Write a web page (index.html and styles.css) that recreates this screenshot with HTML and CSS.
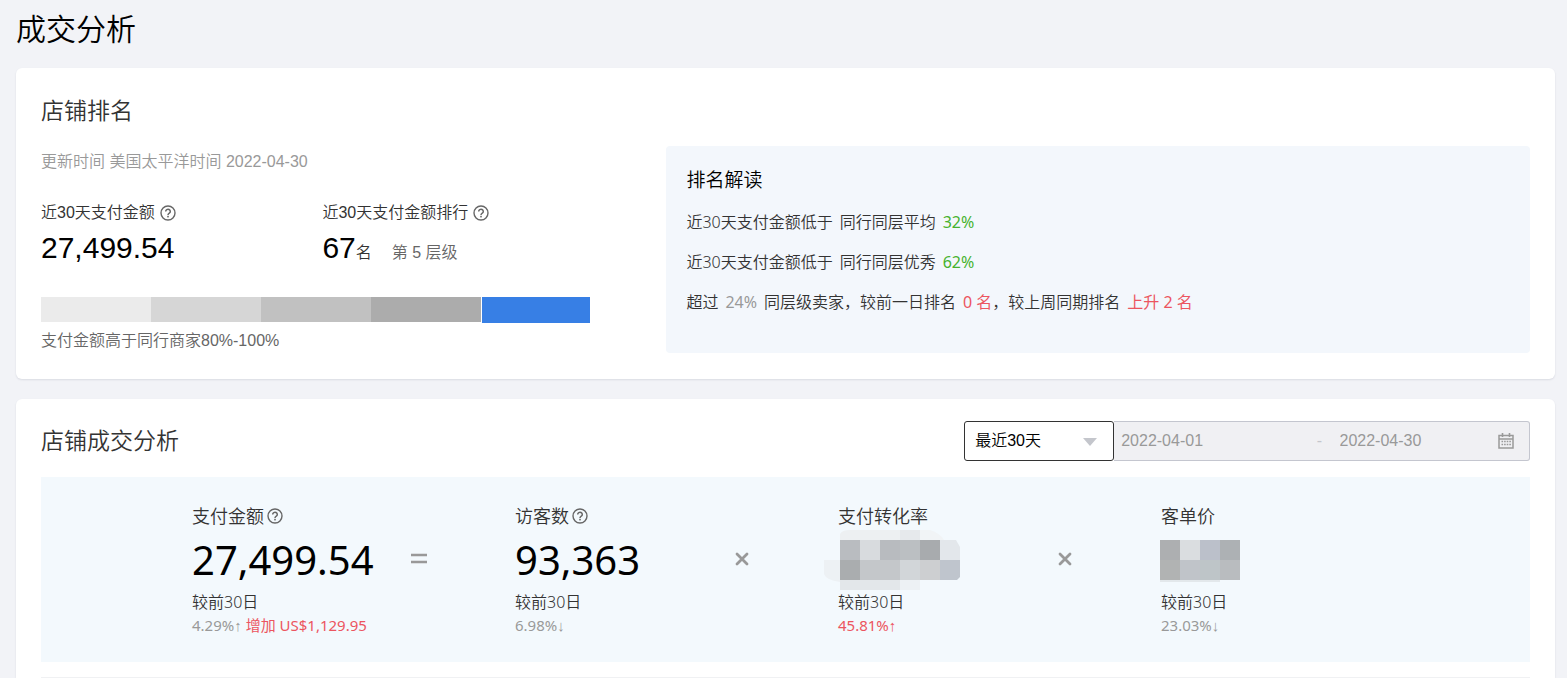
FILE: index.html
```html
<!DOCTYPE html>
<html lang="zh-CN">
<head>
<meta charset="utf-8">
<meta name="viewport" content="width=device-width, initial-scale=1">
<title>成交分析</title>
<link rel="stylesheet" href="styles.css">
</head>
<body>
<svg width="0" height="0" class="sprite" aria-hidden="true">
  <symbol id="help" viewBox="0 0 16 16">
    <circle cx="8" cy="8" r="7" fill="none" stroke="currentColor" stroke-width="1.4"/>
    <path d="M5.7 6.4a2.3 2.1 0 1 1 3.6 1.7C8.4 8.700 8 9 8 9.900" fill="none" stroke="currentColor" stroke-width="1.5"/>
    <rect x="7.200" y="10.800" width="1.600" height="1.600" fill="currentColor"/>
  </symbol>
  <symbol id="times" viewBox="0 0 18 18">
    <path d="M4 3l10 10M14 3L4 13" fill="none" stroke="currentColor" stroke-width="2.800" stroke-linecap="round"/>
  </symbol>
</svg>
<main class="page">
  <h1 class="page-title">成交分析</h1>

  <section class="card">
    <h2 class="card-title">店铺排名</h2>
    <div class="rank">
      <div class="rank-data">
        <p class="updated">更新时间 美国太平洋时间 2022-04-30</p>
        <div class="stats">
          <div class="stat">
            <div class="stat-label">近30天支付金额<svg class="help"><use href="#help"/></svg></div>
            <div class="stat-value">27,499.54</div>
          </div>
          <div class="stat">
            <div class="stat-label">近30天支付金额排行<svg class="help"><use href="#help"/></svg></div>
            <div class="stat-value">67<span class="unit">名</span><span class="level">第 5 层级</span></div>
          </div>
        </div>
        <div class="levels">
          <span class="seg seg-1"></span><span class="seg seg-2"></span><span class="seg seg-3"></span><span class="seg seg-4"></span><span class="seg seg-5"></span>
        </div>
        <p class="caption">支付金额高于同行商家80%-100%</p>
      </div>
      <div class="insight">
        <h3 class="insight-title">排名解读</h3>
        <p class="insight-row"><span>近30天支付金额低于</span><span>同行同层平均</span><span class="good">32%</span></p>
        <p class="insight-row"><span>近30天支付金额低于</span><span>同行同层优秀</span><span class="good">62%</span></p>
        <p class="insight-row"><span>超过</span><span class="muted">24%</span><span>同层级卖家，较前一日排名</span><span><span class="bad">0 名</span>，较上周同期排名</span><span class="bad">上升 2 名</span></p>
      </div>
    </div>
  </section>

  <section class="card card-deal">
    <header class="deal-head">
      <h2 class="card-title">店铺成交分析</h2>
      <div class="filters">
        <div class="period">
          <select class="period-select" aria-label="统计周期"><option>最近30天</option></select>
          <svg class="caret" viewBox="0 0 14 8" aria-hidden="true"><path d="M0 0h14L7 8z" fill="#c4c6cc"/></svg>
        </div>
        <div class="range">
          <input class="date date-start" type="text" value="2022-04-01" aria-label="开始日期" disabled>
          <span class="dash">-</span>
          <input class="date date-end" type="text" value="2022-04-30" aria-label="结束日期" disabled>
          <svg class="calendar" viewBox="0 0 16 16" aria-hidden="true">
            <path d="M1 2.500h14v12.500H1zM1 6h14" fill="none" stroke="#999" stroke-width="1.500"/>
            <path d="M4.500 0v4M11.500 0v4" stroke="#999" stroke-width="1.600"/>
            <path d="M3.500 8.500h9.500M3.500 11.500h9.500" stroke="#999" stroke-width="1.600" stroke-dasharray="1.600 1"/>
          </svg>
        </div>
      </div>
    </header>

    <div class="metrics">
      <div class="metric">
        <div class="metric-label">支付金额<svg class="help"><use href="#help"/></svg></div>
        <div class="metric-value">27,499.54</div>
        <svg class="operator" viewBox="0 0 18 18" role="img" aria-label="等于"><path d="M1 4h16M1 11h16" stroke="currentColor" stroke-width="2.400"/></svg>
        <div class="metric-base">较前30日</div>
        <div class="metric-change">4.29%<span class="arrow">↑</span> <span class="bad">增加 US$1,129.95</span></div>
      </div>
      <div class="metric">
        <div class="metric-label">访客数<svg class="help"><use href="#help"/></svg></div>
        <div class="metric-value">93,363</div>
        <svg class="operator" role="img" aria-label="乘以"><use href="#times"/></svg>
        <div class="metric-base">较前30日</div>
        <div class="metric-change">6.98%<span class="arrow">↓</span></div>
      </div>
      <div class="metric">
        <div class="metric-label">支付转化率</div>
        <div class="metric-value">
          <svg class="mosaic" width="122" height="60" viewBox="-2 0 122 60" aria-hidden="true">
            <path d="M0 10V4Q2 0 10 0H80V10z" fill="#edf0f2"/>
            <path d="M60 0h20v10H60z" fill="#e6e9ec"/>
            <path d="M80 0h10q10 3 14 10H80z" fill="#f1f4f6"/>
            <path d="M0 30h-16v14q2 6 16 8z" fill="#edf1f4"/>
            <path d="M0 50h60v10H0z" fill="#e3e7ea"/>
            <path d="M60 50h20v10H60z" fill="#edf1f4"/>
            <path d="M0 10h20v20H0z" fill="#b9bcc0"/>
            <path d="M20 10h20v20H20z" fill="#d8dbde"/>
            <path d="M40 10h20v20H40z" fill="#b8bbbf"/>
            <path d="M60 10h20v20H60z" fill="#bbbfc2"/>
            <path d="M80 10h20v20H80z" fill="#a8abae"/>
            <path d="M100 10h16l4 7v13h-20z" fill="#e3e7eb"/>
            <path d="M0 30h20v20H0z" fill="#aaadaf"/>
            <path d="M20 30h40v20H20z" fill="#c4c7ca"/>
            <path d="M60 30h20v20H60z" fill="#d2d6d9"/>
            <path d="M80 30h20v20H80z" fill="#cdcfd1"/>
            <path d="M100 30h20v17l-3 3h-17z" fill="#bfc5cd"/>
          </svg>
        </div>
        <svg class="operator" role="img" aria-label="乘以"><use href="#times"/></svg>
        <div class="metric-base">较前30日</div>
        <div class="metric-change"><span class="bad">45.81%<span class="arrow">↑</span></span></div>
      </div>
      <div class="metric">
        <div class="metric-label">客单价</div>
        <div class="metric-value">
          <svg class="mosaic" width="80" height="60" viewBox="1 0 80 60" aria-hidden="true">
            <path d="M0 50h60v2H0z" fill="#e3e8eb"/>
            <path d="M0 10h20v20H0z" fill="#adafb1"/>
            <path d="M20 10h20v20H20z" fill="#dadde0"/>
            <path d="M40 10h20v20H40z" fill="#bbc0ca"/>
            <path d="M60 10h20v20H60z" fill="#adb1b4"/>
            <path d="M0 30h20v20H0z" fill="#b1b3b3"/>
            <path d="M20 30h20v20H20z" fill="#c0c4c9"/>
            <path d="M40 30h20v20H40z" fill="#bec5c8"/>
            <path d="M60 30h20v20H60z" fill="#b9bcbf"/>
          </svg>
        </div>
        <div class="metric-base">较前30日</div>
        <div class="metric-change">23.03%<span class="arrow">↓</span></div>
      </div>
    </div>
    <hr class="divider">
  </section>
</main>
</body>
</html>
```
FILE: styles.css
```css
* { box-sizing: border-box; }
body {
  margin: 0;
  background: #f2f3f7;
  color: #333;
  font: 350 16px/24px "Liberation Sans", "Noto Sans CJK SC", sans-serif;
}
h1, h2, h3, p { margin: 0; font-weight: inherit; }
.sprite { position: absolute; }
.page {
  display: flex;
  flex-direction: column;
  min-height: 100vh;
  padding: 0 12px 0 16px;
}
.page-title { padding: 8px 0 16px; font-size: 30px; line-height: 44px; color: #000; }
.card {
  padding: 25px 25px 26px;
  background: #fff;
  border-radius: 6px;
  box-shadow: 0 1px 2px rgba(40, 50, 80, 0.12);
}
.card-title { font-size: 23px; line-height: 36px; }
.help { flex: none; width: 16px; height: 16px; margin-left: 5px; color: #666; }
.good, .bad, .muted { font-weight: 400; }
.good { color: #46b22e; }
.bad { color: #ec5560; }
.muted { color: #999; }

.rank { display: grid; grid-template-columns: 42fr 58fr; margin-top: 17px; }
.updated { line-height: 32px; color: #999; }
.stats { display: grid; grid-template-columns: 45% 55%; margin-top: 23px; }
.stat-label { display: flex; align-items: center; }
.stat-value { display: flex; align-items: baseline; height: 46px; font-size: 30px; line-height: 46px; color: #000; }
.unit { font-size: 16px; line-height: 24px; color: #333; }
.level { margin-left: 20px; font-size: 16px; line-height: 24px; color: #666; }
.levels { display: grid; grid-template-columns: repeat(5, 1fr); height: 26px; margin: 26px 76px 0 0; }
.seg { margin-bottom: 1px; }
.seg-1 { background: #ebebeb; }
.seg-2 { background: #d6d6d6; }
.seg-3 { background: #c1c1c1; }
.seg-4 { background: #acacac; }
.seg-5 { margin: 0 0 0 1px; background: #377fe5; }
.caption { margin-top: 6px; color: #666; }
.insight {
  padding: 20px;
  background: #f3f7fc;
  border-radius: 4px;
  font-family: "Noto Sans", "Noto Sans CJK SC", sans-serif;
}
.insight-title { margin-bottom: 8px; font-size: 19px; line-height: 28px; color: #000; }
.insight-row { display: flex; flex-wrap: wrap; gap: 0 7px; line-height: 40px; }

.card-deal {
  flex: 1;
  margin-top: 20px;
  padding: 22px 25px 0;
  border-radius: 6px 6px 0 0;
}
.deal-head { display: flex; justify-content: space-between; align-items: center; }
.filters { display: flex; width: 38%; height: 40px; }
.period { position: relative; flex: 0 0 150px; }
.period-select {
  appearance: none;
  width: 100%;
  height: 100%;
  padding: 0 30px 0 10px;
  border: 1px solid #333;
  border-radius: 3px;
  background: #fff;
  color: #000;
  font: inherit;
}
.caret { position: absolute; top: 17px; right: 17px; width: 14px; height: 8px; pointer-events: none; }
.range {
  display: flex;
  flex: 1;
  align-items: center;
  padding: 0 15px 0 7px;
  border: 1px solid #c4c6cf;
  border-left: 0;
  border-radius: 0 3px 3px 0;
  background: #f0f0f3;
}
.date { width: 0; padding: 0; border: 0; background: transparent; color: #999; font: inherit; }
.date-start { flex: 18; }
.date-end { flex: 16; }
.dash { flex: none; width: 40px; text-align: center; color: #c4c6cc; }
.calendar { flex: none; width: 16px; height: 16px; }

.metrics {
  display: grid;
  grid-template-columns: repeat(4, 1fr);
  margin-top: 16px;
  padding: 25px 46px 26px 151px;
  background: #f3f9fd;
  font-family: "Noto Sans", "Noto Sans CJK SC", sans-serif;
}
.metric {
  display: grid;
  grid-template: 28px 60px 24px 22px / 218px 1fr;
  align-items: center;
}
.metric-label { display: flex; grid-column: 1 / -1; align-items: center; font-size: 18px; }
.metric-label .help { margin-left: 3px; }
.metric-value { grid-column: 1; font-size: 40px; font-weight: 400; line-height: 60px; color: #000; }
.mosaic { display: block; overflow: visible; }
.operator { grid-column: 2; width: 18px; height: 18px; color: #999; }
.metric-base { grid-column: 1 / -1; }
.metric-change { grid-column: 1 / -1; font-size: 15px; font-weight: 400; line-height: 22px; color: #999; white-space: nowrap; }
.arrow { font-family: "Liberation Sans", sans-serif; }
.divider { width: 100%; margin: 15px 0 0; border: 0; border-top: 1px solid #f0f1f3; }
```
